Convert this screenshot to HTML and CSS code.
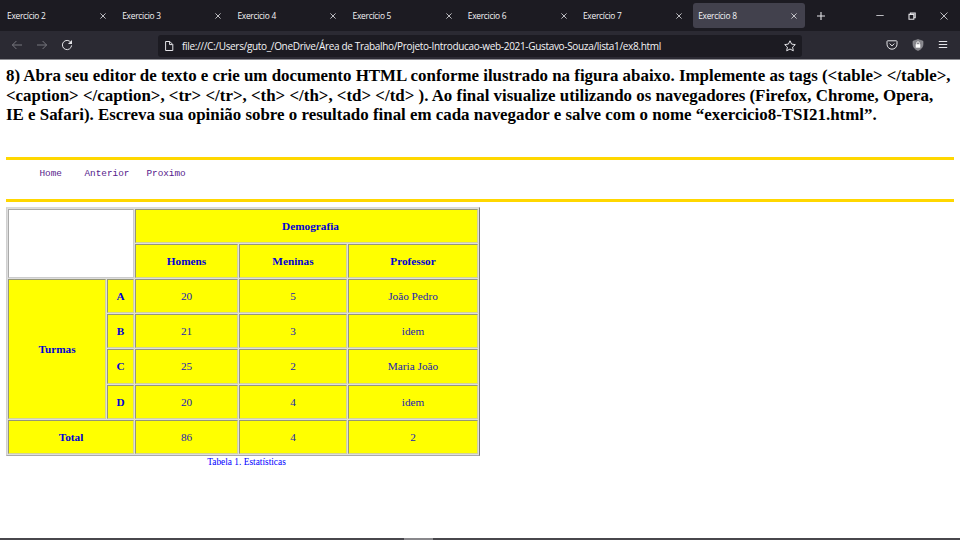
FILE: index.html
```html
<!DOCTYPE html>
<html lang="pt-BR">
<head>
<meta charset="utf-8">
<title>Exercício 8</title>
<link rel="stylesheet" href="styles.css">
</head>
<body>
<header class="browser">
  <div class="tabs">
    <div class="tab"><span>Exercício 2</span><svg class="close" viewBox="0 0 8 8"><path d="M1.4 1.4l5.2 5.2M6.6 1.4L1.4 6.6"/></svg></div>
    <div class="tab"><span>Exercicio 3</span><svg class="close" viewBox="0 0 8 8"><path d="M1.4 1.4l5.2 5.2M6.6 1.4L1.4 6.6"/></svg></div>
    <div class="tab"><span>Exercicio 4</span><svg class="close" viewBox="0 0 8 8"><path d="M1.4 1.4l5.2 5.2M6.6 1.4L1.4 6.6"/></svg></div>
    <div class="tab"><span>Exercício 5</span><svg class="close" viewBox="0 0 8 8"><path d="M1.4 1.4l5.2 5.2M6.6 1.4L1.4 6.6"/></svg></div>
    <div class="tab"><span>Exercicio 6</span><svg class="close" viewBox="0 0 8 8"><path d="M1.4 1.4l5.2 5.2M6.6 1.4L1.4 6.6"/></svg></div>
    <div class="tab"><span>Exercício 7</span><svg class="close" viewBox="0 0 8 8"><path d="M1.4 1.4l5.2 5.2M6.6 1.4L1.4 6.6"/></svg></div>
    <div class="tab active"><span>Exercício 8</span><svg class="close" viewBox="0 0 8 8"><path d="M1.4 1.4l5.2 5.2M6.6 1.4L1.4 6.6"/></svg></div>
    <svg class="newtab" viewBox="0 0 10 10"><path d="M5 1v8M1 5h8"/></svg>
    <div class="window">
      <svg viewBox="0 0 10 10"><path d="M1.3 4.5h7.4"/></svg>
      <svg class="restore" viewBox="0 0 10 10"><path d="M2 3.4h4.8v4.8H2zM3.4 3V2h4.8v4.8H7"/></svg>
      <svg viewBox="0 0 10 10"><path d="M1.5 1.5l7 7M8.5 1.5l-7 7"/></svg>
    </div>
  </div>
  <div class="toolbar">
    <div class="history">
      <svg class="dim" viewBox="0 0 12 12"><path d="M11 6H1.4M5.4 2L1.4 6l4 4"/></svg>
      <svg class="dim" viewBox="0 0 12 12"><path d="M1 6h9.6M6.6 2l4 4-4 4"/></svg>
      <svg viewBox="0 0 12 12"><path d="M9.8 3.4A4.6 4.6 0 1 0 10.6 6.4"/><path class="fill" d="M11 1v4.1H6.9z"/></svg>
    </div>
    <div class="address">
      <svg viewBox="0 0 12 12"><path d="M2.6 1.5h4.2l3 3v6H2.6zM6.6 1.6v3h3"/></svg>
      <span class="url">file:///C:/Users/guto_/OneDrive/Área de Trabalho/Projeto-Introducao-web-2021-Gustavo-Souza/lista1/ex8.html</span>
      <svg class="star" viewBox="0 0 12 12"><path d="M6 .8l1.6 3.3 3.700.5-2.700 2.500.7 3.700L6 9l-3.300 1.800.7-3.700L.7 4.600l3.700-.5z"/></svg>
    </div>
    <div class="actions">
      <svg viewBox="0 0 12 12"><path d="M1.7 1.8h8.6q.7 0 .7.7v2.7a5 5 0 0 1-10 0V2.500q0-.7.7-.7zM3.6 4.6L6 6.900l2.400-2.300"/></svg>
      <svg class="shield" viewBox="0 0 12 12"><path class="plate" d="M6 .5l5 1.700v3c0 3-2 5.200-5 6.300-3-1.100-5-3.300-5-6.300v-3z"/><path class="lockbody" d="M3.700 5.200h4.600v3.500H3.700z"/><path class="shackle" d="M4.600 5.400V4.200a1.400 1.400 0 0 1 2.800 0v1.200"/></svg>
      <svg viewBox="0 0 12 12"><path d="M1.800 2.500h8.400M1.800 5.500h8.400M1.800 8.500h8.400"/></svg>
    </div>
  </div>
</header>
<main>
  <h1>8) Abra seu editor de texto e crie um documento HTML conforme ilustrado na figura abaixo. Implemente as tags (&lt;table&gt; &lt;/table&gt;,<br>&lt;caption&gt; &lt;/caption&gt;, &lt;tr&gt; &lt;/tr&gt;, &lt;th&gt; &lt;/th&gt;, &lt;td&gt; &lt;/td&gt; ). Ao final visualize utilizando os navegadores (Firefox, Chrome, Opera,<br>IE e Safari). Escreva sua opinião sobre o resultado final em cada navegador e salve com o nome “exercicio8-TSI21.html”.</h1>
  <nav><a>Home</a><a>Anterior</a><a>Proximo</a></nav>
  <table>
    <caption>Tabela 1. Estatísticas</caption>
    <colgroup><col class="c1"><col class="c2"><col class="c3"><col class="c4"><col class="c5"></colgroup>
    <tr><td class="blank" colspan="2" rowspan="2"></td><th class="group" colspan="3">Demografia</th></tr>
    <tr><th>Homens</th><th>Meninas</th><th>Professor</th></tr>
    <tr><th rowspan="4">Turmas</th><th>A</th><td>20</td><td>5</td><td>João Pedro</td></tr>
    <tr><th>B</th><td>21</td><td>3</td><td>idem</td></tr>
    <tr class="tall"><th>C</th><td>25</td><td>2</td><td>Maria João</td></tr>
    <tr><th>D</th><td>20</td><td>4</td><td>idem</td></tr>
    <tr><th colspan="2">Total</th><td>86</td><td>4</td><td>2</td></tr>
  </table>
</main>
<footer><div class="thumb"></div></footer>
</body>
</html>
```
FILE: styles.css
```css
* { box-sizing: border-box; }
body {
  margin: 0;
  width: 960px;
  height: 540px;
  display: flex;
  flex-direction: column;
  overflow: hidden;
  background: #fff;
  font-family: "Liberation Serif", serif;
}
svg { display: block; flex: none; fill: none; stroke: #e4e4e8; stroke-width: 1; }
.browser { height: 60px; flex: none; background: #2b2a33; border-bottom: 1px solid #8e8e93; font-family: "Open Sans", sans-serif; color: #f4f4f6; }
.tabs { height: 31px; background: #1c1b22; display: flex; align-items: center; padding-left: 1.500px; }
.tab { width: 112.500px; height: 25px; margin-right: 2.700px; padding: 0 7px 0 5.500px; display: flex; align-items: center; justify-content: space-between; border-radius: 3px; font-size: 8.400px; letter-spacing: -0.260px; white-space: nowrap; }
.tab.active { background: #42414d; }
.close { width: 8px; height: 8px; stroke-width: .8; }
.newtab { width: 10px; height: 10px; margin-left: 8px; stroke-width: 1.100; }
.window { margin-left: auto; padding-right: 11.500px; display: flex; gap: 22px; }
.window svg { width: 10px; height: 10px; stroke-width: .8; }
.window .restore { stroke-width: 1.100; }
.toolbar { height: 28px; display: flex; align-items: center; }
.history { width: 158px; padding-left: 11px; display: flex; gap: 13px; }
.history svg, .actions svg { width: 12px; height: 12px; }
.history .dim { stroke: #77767e; }
.history .fill { fill: #e4e4e8; stroke: none; }
.address { width: 644px; height: 22px; margin-top: 1px; padding: 0 6px 0 5px; display: flex; align-items: center; border-radius: 3px; background: #1c1b22; }
.address svg { width: 12px; height: 12px; }
.url { margin-left: 7px; font-size: 10px; letter-spacing: -0.325px; white-space: nowrap; }
.address .star { margin-left: auto; }
.actions { margin-left: auto; padding-right: 11px; display: flex; gap: 13.300px; }
.shield .plate { fill: #85848a; stroke: #9e9da3; stroke-width: .6; }
.shield .lockbody { fill: #fff; stroke: none; }
.shield .shackle { stroke: #fff; stroke-width: .8; }
main { flex: 1; padding: 6px 6px 0; }
h1 { margin: 0; height: 91px; font-size: 16.900px; line-height: 19.700px; white-space: nowrap; }
nav { height: 45px; border-top: 3px solid #ffd700; border-bottom: 3px solid #ffd700; padding: 5px 0 0 33.500px; display: flex; font: 9.370px/18px "Liberation Mono", monospace; color: #551a8b; }
nav a { line-height: 18px; }
nav a + a { margin-left: 22.500px; }
nav a:last-child { margin-left: 17px; }
table { width: 474px; margin-top: 5px; table-layout: fixed; border: 1px solid; border-color: #d9d9d9 #777 #aaa #d0d0d0; border-collapse: separate; border-spacing: 1px; background: #dedede; font-size: 11.250px; color: #00f; }
caption { caption-side: bottom; height: 12px; padding-left: 7px; font-size: 9.370px; line-height: 12px; }
.c1 { width: 98px; }
.c2 { width: 27px; }
.c3 { width: 103px; }
.c4 { width: 108px; }
.c5 { width: 130px; }
tr { height: 34px; }
tr.tall { height: 35px; }
th, td { padding: 0; border: 1px solid; border-color: #969675 #d2d29a #d2d29a #969675; background: #ff0; text-align: center; vertical-align: middle; line-height: 13px; }
th { color: #0000d8; }
td { color: #2222b4; }
.group { padding-left: 8px; }
.blank { background: #fff; border-color: #aaa #ccc #ccc #aaa; }
footer { height: 2px; flex: none; background: #48474c; }
.thumb { width: 29px; height: 2px; margin-left: 404px; background: #89888c; }
```
